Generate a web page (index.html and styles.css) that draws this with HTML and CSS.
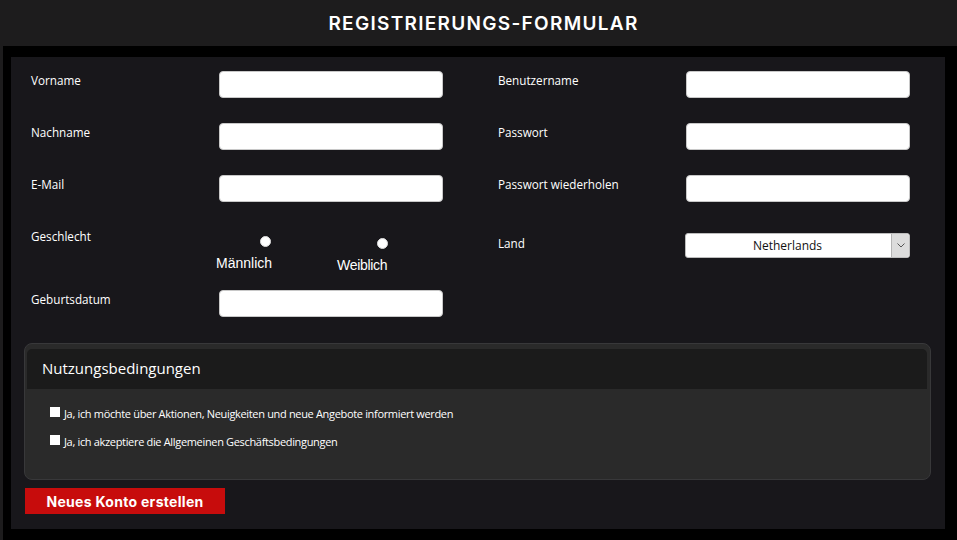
FILE: index.html
```html
<!DOCTYPE html>
<html lang="de">
<head>
<meta charset="utf-8">
<title>Registrierungs-Formular</title>
<link rel="stylesheet" href="styles.css">
</head>
<body>
<header class="topbar"><h1>REGISTRIERUNGS-FORMULAR</h1></header>
<div class="frame">
  <form class="panel">
    <div class="fields">
      <div class="col col-left">
        <div class="row"><label class="lbl">Vorname</label><input class="txt" type="text"></div>
        <div class="row"><label class="lbl">Nachname</label><input class="txt" type="text"></div>
        <div class="row"><label class="lbl">E-Mail</label><input class="txt" type="text"></div>
        <div class="row gender">
          <label class="lbl">Geschlecht</label>
          <div class="options">
            <label class="opt"><span class="dot"></span><span class="opttext">Männlich</span></label>
            <label class="opt opt2"><span class="dot"></span><span class="opttext">Weiblich</span></label>
          </div>
        </div>
        <div class="row"><label class="lbl">Geburtsdatum</label><input class="txt" type="text"></div>
      </div>
      <div class="col col-right">
        <div class="row"><label class="lbl">Benutzername</label><input class="txt" type="text"></div>
        <div class="row"><label class="lbl">Passwort</label><input class="txt" type="password"></div>
        <div class="row"><label class="lbl">Passwort wiederholen</label><input class="txt" type="password"></div>
        <div class="row land">
          <label class="lbl">Land</label>
          <div class="selwrap">
            <select class="sel"><option>Netherlands</option></select>
            <span class="arrow"><svg width="8" height="5" viewBox="0 0 8 5"><path d="M0.5 0.5 L4 4 L7.5 0.5" fill="none" stroke="#555" stroke-width="1"/></svg></span>
          </div>
        </div>
      </div>
    </div>
    <section class="terms">
      <h2 class="terms-head">Nutzungsbedingungen</h2>
      <div class="terms-body">
        <label class="chk"><span class="box"></span>Ja, ich möchte über Aktionen, Neuigkeiten und neue Angebote informiert werden</label>
        <label class="chk"><span class="box"></span>Ja, ich akzeptiere die Allgemeinen Geschäftsbedingungen</label>
      </div>
    </section>
    <button class="submit" type="button">Neues Konto erstellen</button>
  </form>
</div>
</body>
</html>
```
FILE: styles.css
```css
* { box-sizing: border-box; }
html, body { margin: 0; padding: 0; }
body {
  width: 957px;
  height: 540px;
  overflow: hidden;
  background: #1d1c1d;
  font-family: "Open Sans", "Liberation Sans", sans-serif;
  color: #fff;
}
.topbar {
  height: 46px;
  display: flex;
  align-items: center;
  justify-content: center;
  padding-left: 10px;
}
.topbar h1 {
  margin: 0;
  font-family: Inter, "Liberation Sans", sans-serif;
  font-weight: 600;
  font-size: 19px;
  letter-spacing: 1.3px;
  color: #fff;
}
.frame {
  margin-left: 3px;
  height: 494px;
  background: #000;
  padding: 11px 12px 11px 8px;
}
.panel {
  height: 472px;
  margin: 0;
  background: #18171b;
  padding: 14px 14px 0 13px;
}
.fields {
  display: flex;
  padding-left: 7px;
}
.col {
  flex: none;
  display: flex;
  flex-direction: column;
}
.col-left { width: 467px; }
.col-right { width: 420px; }
.row {
  display: flex;
  align-items: flex-start;
  height: 27px;
  margin-bottom: 25px;
}
.row:last-child { margin-bottom: 0; }
.lbl {
  width: 188px;
  flex: none;
  font-size: 11.7px;
  line-height: 16px;
  padding-top: 1px;
  color: #fff;
}
.txt {
  width: 224px;
  height: 27px;
  margin: 0;
  border: 1px solid #c8c8c8;
  border-radius: 4px;
  background: #fff;
  padding: 0 6px;
  font-size: 12px;
}
.gender { height: 63px; margin-bottom: 0; }
.options {
  display: flex;
  margin-left: -3px;
  gap: 65px;
}
.opt {
  display: flex;
  flex-direction: column;
  align-items: flex-end;
  padding-top: 9px;
}
.opt2 { padding-top: 11px; }
.dot {
  width: 11px;
  height: 11px;
  border-radius: 50%;
  background: #fff;
  border: 1px solid #ddd;
  margin-right: 1px;
}
.opt2 .dot { margin-right: -1px; }
.opttext {
  font-family: "Liberation Sans", Arial, sans-serif;
  font-size: 14px;
  line-height: 16px;
  margin-top: 8px;
  color: #fff;
}
.opt2 .opttext { letter-spacing: -0.3px; }
.land { margin-top: 6px; height: 25px; }
.land .lbl { padding-top: 2px; }
.selwrap {
  position: relative;
  width: 225px;
  height: 25px;
  margin-left: -1px;
}
.sel {
  appearance: none;
  -webkit-appearance: none;
  width: 100%;
  height: 25px;
  margin: 0;
  border: 1px solid #bdbdbd;
  border-radius: 3px;
  background: #fff;
  font-family: "Open Sans", "Liberation Sans", sans-serif;
  font-size: 12px;
  color: #111;
  text-align: center;
  text-align-last: center;
  padding: 0 20px 0 0;
}
.arrow {
  position: absolute;
  right: 1px;
  top: 1px;
  width: 18px;
  height: 23px;
  background: #dcdcdc;
  border-left: 1px solid #b4b4b4;
  border-radius: 0 2px 2px 0;
  display: flex;
  align-items: center;
  justify-content: center;
}
.terms {
  margin-top: 26px;
  height: 137px;
  border: 1px solid #38383a;
  border-radius: 8px;
  background: #2a2a2a;
  padding: 5px 3px 0 2px;
}
.terms-head {
  margin: 0;
  height: 40px;
  background: #1b1b1b;
  border-radius: 5px 5px 0 0;
  font-weight: 400;
  font-size: 15px;
  line-height: 38px;
  padding-left: 15px;
  color: #fff;
}
.terms-body {
  padding: 17px 0 0 23px;
  display: flex;
  flex-direction: column;
  gap: 12px;
}
.chk {
  display: flex;
  align-items: center;
  font-size: 11px;
  letter-spacing: -0.33px;
  line-height: 16px;
  color: #fff;
}
.box {
  width: 10px;
  height: 10px;
  background: #fff;
  margin-right: 4px;
  margin-top: -4px;
  flex: none;
}
.submit {
  display: block;
  margin-top: 8px;
  margin-left: 1px;
  width: 200px;
  height: 26px;
  border: 0;
  background: #c70c0c;
  color: #fff;
  font-family: Inter, "Liberation Sans", sans-serif;
  font-weight: 700;
  font-size: 14px;
  letter-spacing: 0.3px;
  padding: 0;
}
```
